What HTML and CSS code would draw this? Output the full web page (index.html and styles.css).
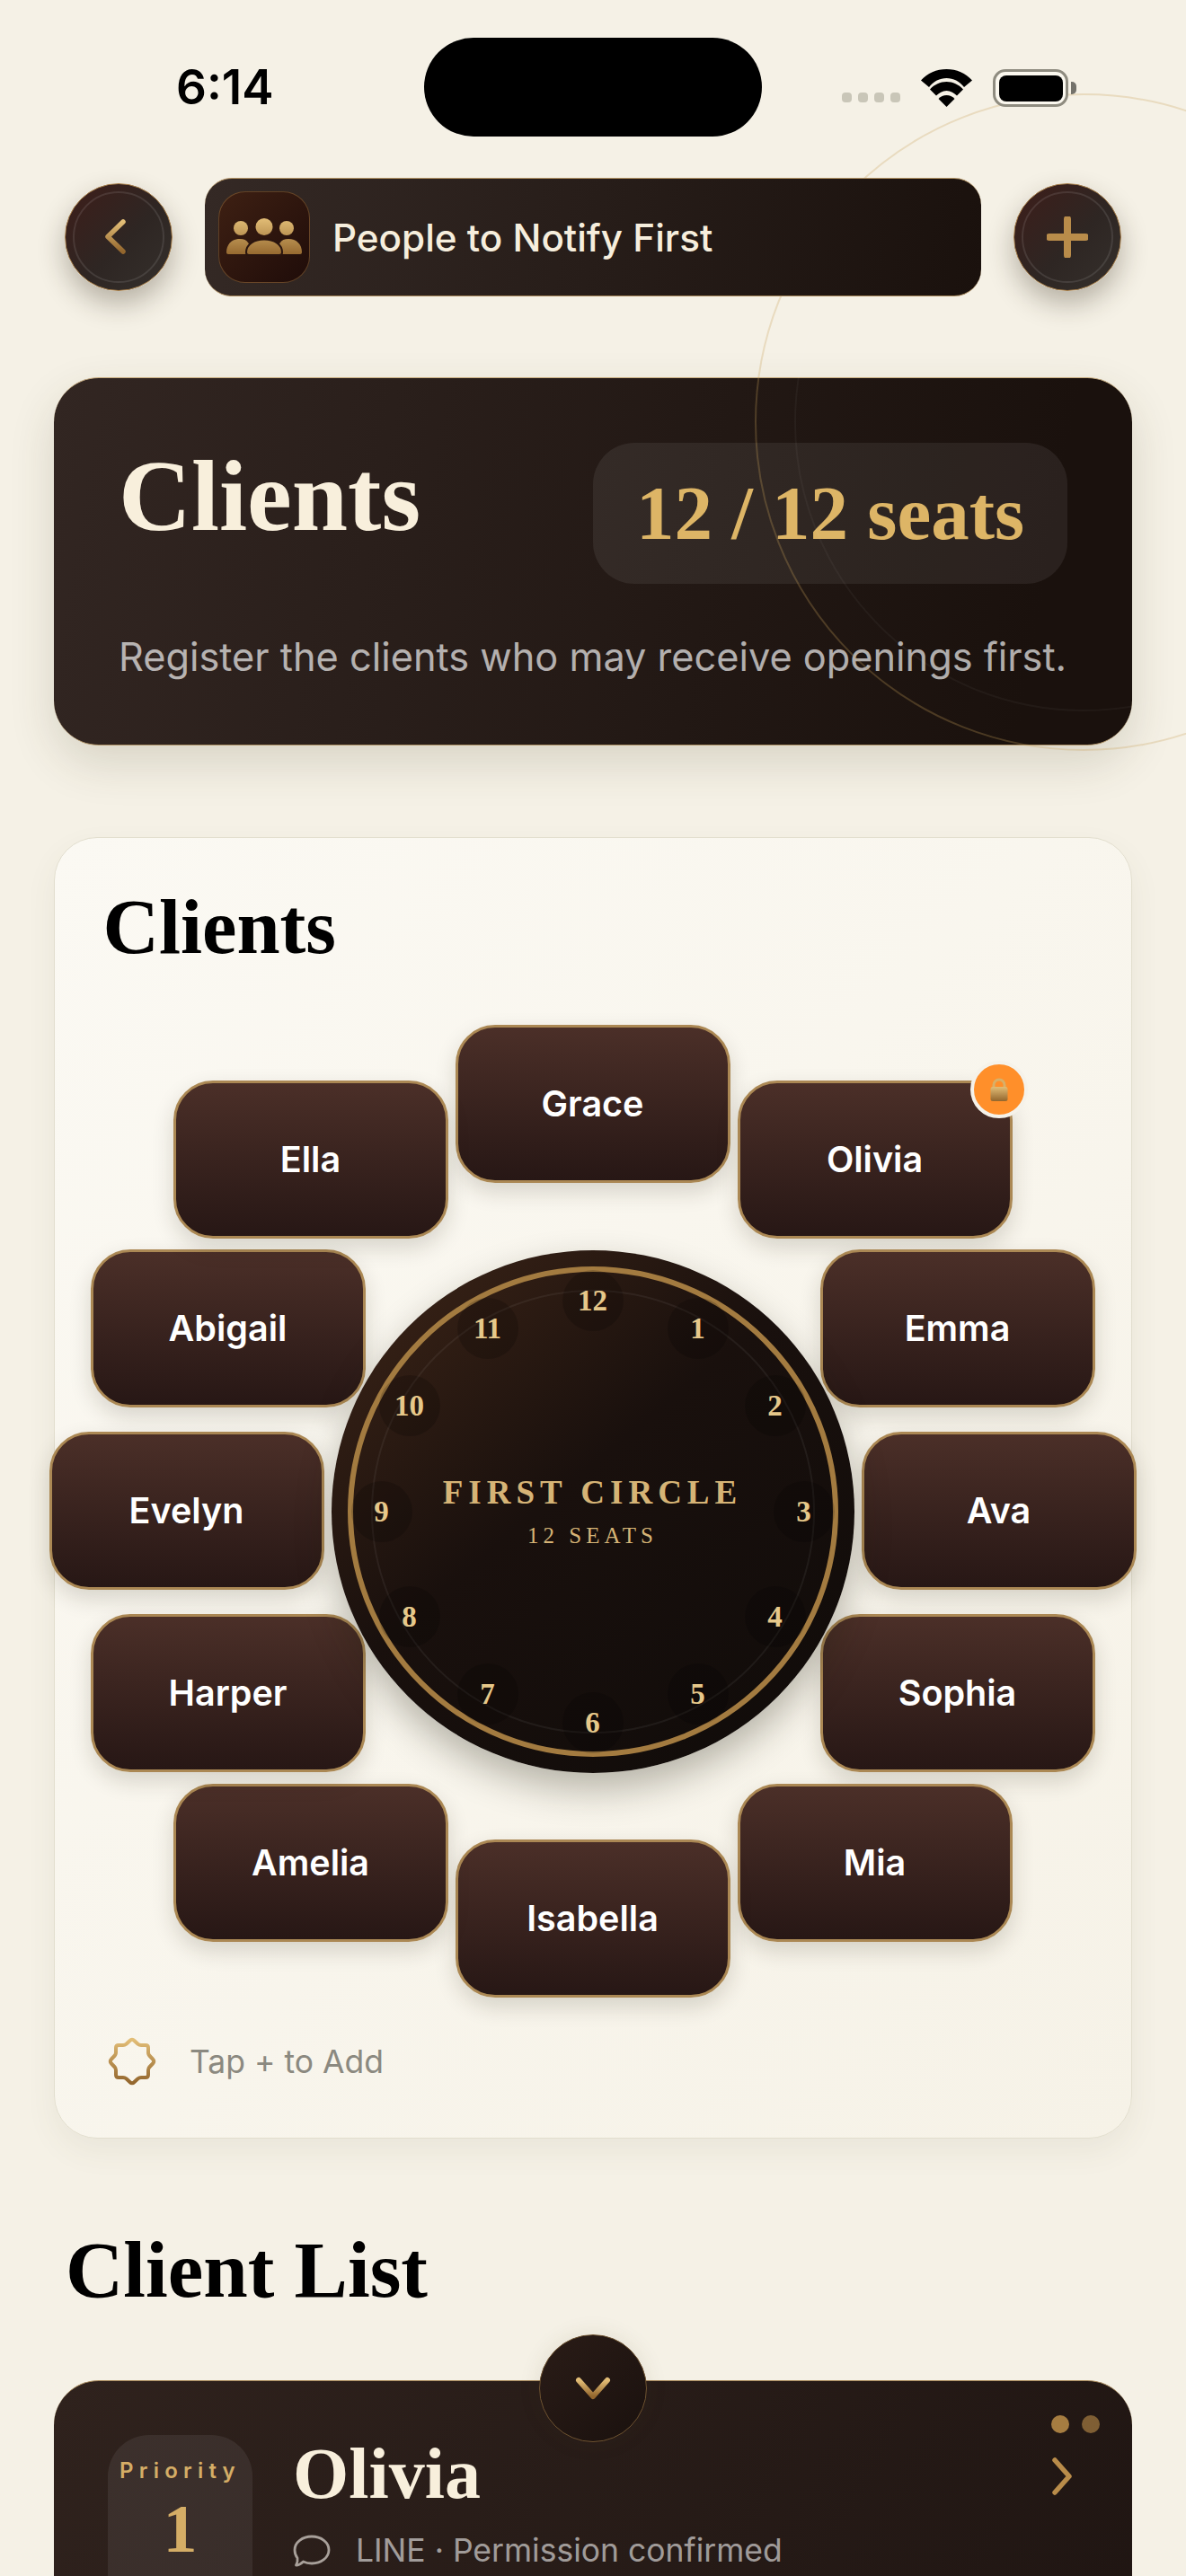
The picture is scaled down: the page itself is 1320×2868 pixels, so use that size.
FILE: index.html
```html
<!DOCTYPE html>
<html lang="en">
<head>
  <meta charset="UTF-8">
  <meta name="viewport" content="width=device-width, initial-scale=1.0">
  <title>People to Notify First</title>
  <link rel="stylesheet" href="styles.css">
</head>
<body>
  <svg class="defs" width="0" height="0">
    <defs>
      <linearGradient id="gold" x1="0" y1="0" x2="0" y2="1">
        <stop offset="0" stop-color="#e2bd76"/>
        <stop offset="1" stop-color="#93662d"/>
      </linearGradient>
      <linearGradient id="goldUser" gradientUnits="userSpaceOnUse" x1="0" y1="30" x2="0" y2="72">
        <stop offset="0" stop-color="#e2bd76"/>
        <stop offset="1" stop-color="#93662d"/>
      </linearGradient>
    </defs>
  </svg>
  <div class="screen">
    <div class="ring ring-outer"></div>
    <div class="ring ring-inner"></div>

    <div class="status-bar">
      <div class="time">6:14</div>
      <div class="island"></div>
      <div class="status-icons">
        <div class="signal"><span></span><span></span><span></span><span></span></div>
        <svg class="wifi" width="57" height="42" viewBox="0 0 57 42">
          <path d="M0 12.500C7 4.500 17.500 0 28.500 0S50 4.500 57 12.500L48 20C43 13.500 36 10 28.500 10S14 13.500 9 20Z"/>
          <path d="M10 22.500C15 17 21.500 14 28.500 14S42 17 47 22.500L40 29.500C37 26.500 33 24 28.500 24S20 26.500 17 29.500Z"/>
          <path d="M19.500 33C22 30.500 25 29 28.500 29S35 30.500 37.500 33L28.500 42Z"/>
        </svg>
        <div class="battery"><div class="battery-fill"></div></div>
        <div class="battery-tip"></div>
      </div>
    </div>

    <div class="nav">
      <button class="round-btn" type="button">
        <svg class="back-icon" width="24" height="40" viewBox="0 0 24 40"><polyline points="20,3 3,19.500 20,36" fill="none" stroke="url(#gold)" stroke-width="5.500" stroke-linecap="round" stroke-linejoin="round"/></svg>
      </button>
      <div class="nav-title">
        <div class="nav-tile">
          <svg width="102" height="102" viewBox="0 0 102 102">
            <circle cx="25" cy="41" r="8" fill="url(#goldUser)"/>
            <circle cx="76" cy="41" r="8" fill="url(#goldUser)"/>
            <circle cx="51" cy="39.500" r="9.500" fill="url(#goldUser)"/>
            <path d="M11 70Q9 70 9 68C9 59 15 53 24 53S36 59 36 70Z" fill="url(#goldUser)"/>
            <path d="M91 70Q93 70 93 68C93 59 87 53 78 53S66 59 66 70Z" fill="url(#goldUser)"/>
            <path d="M34 71Q31 71 31 68C31 59 40 53.500 51 53.500S71 59 71 68Q71 71 68 71Z" fill="url(#goldUser)" stroke="#2a150f" stroke-width="2"/>
          </svg>
        </div>
        <span>People to Notify First</span>
      </div>
      <button class="round-btn" type="button">
        <svg width="46" height="46" viewBox="0 0 46 46"><path d="M23 3V43M3 23H43" fill="none" stroke="#b98c4a" stroke-width="8" stroke-linecap="round"/></svg>
      </button>
    </div>

    <div class="hero">
      <div class="hero-row">
        <h1>Clients</h1>
        <div class="seat-count">12 / 12 seats</div>
      </div>
      <p>Register the clients who may receive openings first.</p>
    </div>

    <section class="seating-card">
      <h2>Clients</h2>
      <div class="seating">
        <div class="seat seat-grace">Grace</div>
        <div class="seat seat-olivia">Olivia
          <div class="lock-badge">
            <svg width="20" height="28" viewBox="0 0 20 28"><path d="M4 14V9a6 6 0 0 1 12 0v5" fill="none" stroke="#d8b069" stroke-width="3"/><rect x="0.500" y="11" width="19" height="16" rx="2.500" fill="url(#gold)"/></svg>
          </div>
        </div>
        <div class="seat seat-emma">Emma</div>
        <div class="seat seat-ava">Ava</div>
        <div class="seat seat-sophia">Sophia</div>
        <div class="seat seat-mia">Mia</div>
        <div class="seat seat-isabella">Isabella</div>
        <div class="seat seat-amelia">Amelia</div>
        <div class="seat seat-harper">Harper</div>
        <div class="seat seat-evelyn">Evelyn</div>
        <div class="seat seat-abigail">Abigail</div>
        <div class="seat seat-ella">Ella</div>

        <div class="dial">
          <div class="dial-gold"></div>
          <div class="dial-faint"></div>
          <div class="hour h12">12</div>
          <div class="hour h1">1</div>
          <div class="hour h2">2</div>
          <div class="hour h3">3</div>
          <div class="hour h4">4</div>
          <div class="hour h5">5</div>
          <div class="hour h6">6</div>
          <div class="hour h7">7</div>
          <div class="hour h8">8</div>
          <div class="hour h9">9</div>
          <div class="hour h10">10</div>
          <div class="hour h11">11</div>
          <div class="dial-label">FIRST CIRCLE</div>
          <div class="dial-sub">12 SEATS</div>
        </div>
      </div>
      <div class="tap-hint">
        <svg width="56" height="56" viewBox="0 0 56 56"><path d="M25.500 5Q28 2.500 30.500 5L34.500 8.800Q36 10 38 10H43Q46 10 46 13V18Q46 20 47.200 21.500L51 25.500Q53.500 28 51 30.500L47.200 34.500Q46 36 46 38V43Q46 46 43 46H38Q36 46 34.500 47.200L30.500 51Q28 53.500 25.500 51L21.500 47.200Q20 46 18 46H13Q10 46 10 43V38Q10 36 8.800 34.500L5 30.500Q2.500 28 5 25.500L8.800 21.500Q10 20 10 18V13Q10 10 13 10H18Q20 10 21.500 8.800Z" fill="none" stroke="url(#gold)" stroke-width="4" stroke-linejoin="round"/></svg>
        <span>Tap + to Add</span>
      </div>
    </section>

    <h2 class="list-title">Client List</h2>

    <section class="client-row">
      <button class="collapse-btn" type="button">
        <svg width="40" height="26" viewBox="0 0 40 26"><polyline points="4,4 20,22 36,4" fill="none" stroke="url(#gold)" stroke-width="6" stroke-linecap="round" stroke-linejoin="round"/></svg>
      </button>
      <div class="priority">
        <div class="priority-label">Priority</div>
        <div class="priority-num">1</div>
      </div>
      <div class="client-info">
        <div class="client-name">Olivia</div>
        <div class="client-meta">
          <svg width="42" height="36" viewBox="0 0 42 36"><path d="M21 2C31.500 2 40 8.500 40 17S31.500 32 21 32C17.500 32 14 31.200 11.500 30 9 32.500 6 34 3.500 34 5 31.500 5.500 29 5 26 3 23.500 2 20.500 2 17 2 8.500 10.500 2 21 2Z" fill="none" stroke="#a8a09a" stroke-width="2.800" stroke-linejoin="round"/></svg>
          <span>LINE · Permission confirmed</span>
        </div>
      </div>
      <div class="row-dots"><span></span><span></span></div>
      <svg class="row-chevron" width="24" height="42" viewBox="0 0 24 42"><polyline points="4,3 20,21 4,39" fill="none" stroke="#b98c4a" stroke-width="5.500" stroke-linecap="round" stroke-linejoin="round"/></svg>
    </section>
  </div>
</body>
</html>
```

FILE: styles.css
```css
* {
  box-sizing: border-box;
}
body {
  margin: 0;
  background: #f5f1e6;
  font-family: Inter, "Noto Sans", sans-serif;
}
.defs {
  position: absolute;
}
.screen {
  position: relative;
  width: 1320px;
  height: 2868px;
  overflow: hidden;
}

/* decorative rings behind the header */
.ring {
  position: absolute;
  border-radius: 50%;
  pointer-events: none;
  z-index: 2;
}
.ring-outer {
  left: 840px;
  top: 104px;
  width: 732px;
  height: 732px;
  border: 2px solid rgba(201, 160, 90, 0.28);
}
.ring-inner {
  left: 884px;
  top: 148px;
  width: 644px;
  height: 644px;
  border: 2px solid rgba(255, 255, 255, 0.04);
}

/* status bar */
.status-bar {
  position: relative;
  z-index: 3;
  display: grid;
  grid-template-columns: 472px 376px 1fr;
  align-items: center;
  height: 110px;
  margin-top: 42px;
}
.time {
  padding-left: 196px;
  font-weight: 600;
  font-size: 53px;
  color: #000;
}
.island {
  height: 110px;
  background: #000;
  border-radius: 55px;
}
.status-icons {
  display: flex;
  align-items: center;
  padding-left: 89px;
  padding-top: 2px;
}
.signal {
  display: flex;
  gap: 7px;
  margin-right: 23px;
  margin-top: 20px;
}
.signal span {
  width: 11px;
  height: 11px;
  border-radius: 4px;
  background: #c9c6b8;
}
.wifi {
  fill: #000;
  margin-right: 23px;
}
.battery {
  width: 84px;
  height: 42px;
  padding: 3.5px;
  border: 3.5px solid #8f8c80;
  border-radius: 14px;
  background: #fbf8ef;
}
.battery-fill {
  height: 100%;
  border-radius: 8px;
  background: #000;
}
.battery-tip {
  width: 6px;
  height: 14px;
  margin-left: 3px;
  border-radius: 0 5px 5px 0;
  background: #74726b;
}

/* nav */
.nav {
  position: relative;
  z-index: 3;
  display: flex;
  align-items: center;
  gap: 36px;
  margin-top: 46px;
  padding: 0 72px;
}
.round-btn {
  position: relative;
  display: flex;
  align-items: center;
  justify-content: center;
  flex: none;
  width: 120px;
  height: 120px;
  padding: 0;
  border: 1.5px solid #a47c48;
  border-radius: 50%;
  background: linear-gradient(135deg, #3b1f1b 10%, #2e2623 55%, #35302c 100%);
  box-shadow: 0 14px 30px rgba(50, 40, 25, 0.32);
}
.round-btn::before {
  content: "";
  position: absolute;
  inset: 8px;
  border: 2px solid rgba(255, 255, 255, 0.1);
  border-radius: 50%;
}
.back-icon {
  margin-right: 6px;
}
.nav-title {
  display: flex;
  align-items: center;
  flex: 1;
  height: 132px;
  padding-left: 15px;
  border-radius: 30px;
  border-top: 1.5px solid #b49464;
  border-bottom: 1.5px solid #a58558;
  background: linear-gradient(100deg, #342925 0%, #1a110d 100%);
  font-weight: 500;
  font-size: 42.2px;
  color: #f6eedd;
}
.nav-tile {
  flex: none;
  width: 102px;
  height: 102px;
  margin-right: 25px;
  border: 1.5px solid rgba(180, 135, 75, 0.4);
  border-radius: 30px;
  background: linear-gradient(135deg, #3e2013 0%, #1f0c09 100%);
}
.nav-tile svg {
  display: block;
  margin: -1.5px;
}

/* hero */
.hero {
  position: relative;
  z-index: 1;
  display: flex;
  flex-direction: column;
  height: 410px;
  margin: 90px 60px 0;
  padding: 72px 72px 0 72px;
  border-radius: 50px;
  border-top: 1.5px solid #c8ad80;
  border-bottom: 1.5px solid #b09468;
  background: linear-gradient(100deg, #322622 0%, #1a110d 90%);
  box-shadow: 0 20px 50px rgba(70, 60, 30, 0.16);
}
.hero-row {
  display: flex;
  justify-content: space-between;
  align-items: flex-start;
  height: 157px;
}
.hero h1 {
  margin: 3px 0 0;
  font-family: "Liberation Serif", serif;
  font-weight: 700;
  font-size: 112px;
  line-height: 112px;
  color: #f8efdc;
}
.seat-count {
  width: 528px;
  height: 157px;
  border-radius: 46px;
  background: rgba(255, 255, 255, 0.07);
  font-family: "Liberation Serif", serif;
  font-weight: 700;
  font-size: 85px;
  line-height: 157px;
  text-align: center;
  color: #ddb566;
}
.hero p {
  margin: 53px 0 0;
  font-size: 43.3px;
  line-height: 56px;
  white-space: nowrap;
  color: rgba(255, 255, 255, 0.66);
}

/* seating card */
.seating-card {
  position: relative;
  height: 1449px;
  margin: 102px 60px 0;
  border: 1.5px solid #e2dece;
  border-radius: 48px;
  background: linear-gradient(135deg, #fbf9f3 0%, #f6f2e7 100%);
  box-shadow: 0 14px 34px rgba(90, 80, 50, 0.07);
}
.seating-card h2 {
  margin: 0;
  padding: 54px 0 0 53.5px;
  font-family: "Liberation Serif", serif;
  font-weight: 700;
  font-size: 86.5px;
  line-height: 90px;
  color: #000;
}
.seating {
  position: absolute;
  left: -1.5px;
  top: 186.5px;
  width: 1200px;
  height: 1110px;
}
.seat {
  position: absolute;
  display: flex;
  align-items: center;
  justify-content: center;
  width: 306px;
  height: 176px;
  border: 3px solid #ab8854;
  border-radius: 44px;
  background: linear-gradient(180deg, #4b2f28 0%, #271715 100%);
  box-shadow: 0 10px 24px rgba(40, 30, 15, 0.16);
  font-weight: 600;
  font-size: 39.5px;
  color: #fff;
}
.seat-grace { left: 447px; top: 21px; }
.seat-olivia { left: 761px; top: 83px; }
.seat-emma { left: 853px; top: 271px; }
.seat-ava { left: 899px; top: 474px; }
.seat-sophia { left: 853px; top: 677px; }
.seat-mia { left: 761px; top: 866px; }
.seat-isabella { left: 447px; top: 928px; }
.seat-amelia { left: 133px; top: 866px; }
.seat-harper { left: 41px; top: 677px; }
.seat-evelyn { left: -5px; top: 474px; }
.seat-abigail { left: 41px; top: 271px; }
.seat-ella { left: 133px; top: 83px; }

.lock-badge {
  position: absolute;
  right: -20px;
  top: -25px;
  display: flex;
  align-items: center;
  justify-content: center;
  width: 64px;
  height: 64px;
  border: 4px solid #f5f2ea;
  border-radius: 50%;
  background: #ff8f2a;
}

/* dial */
.dial {
  position: absolute;
  left: 309px;
  top: 272px;
  display: flex;
  flex-direction: column;
  align-items: center;
  justify-content: center;
  width: 582px;
  height: 582px;
  border-radius: 50%;
  background: linear-gradient(140deg, #3f2618 0%, #19100d 45%, #0f0b09 100%);
  box-shadow: 0 18px 40px rgba(30, 25, 10, 0.3);
}
.dial-gold {
  position: absolute;
  inset: 18px;
  border: 6px solid #a37b40;
  border-radius: 50%;
}
.dial-faint {
  position: absolute;
  inset: 44px;
  border: 2px solid rgba(255, 255, 255, 0.06);
  border-radius: 50%;
}
.hour {
  position: absolute;
  width: 68px;
  height: 68px;
  border-radius: 50%;
  background: rgba(0, 0, 0, 0.18);
  font-family: "Liberation Serif", serif;
  font-weight: 700;
  font-size: 33px;
  line-height: 68px;
  text-align: center;
  color: #e6c88a;
}
.h12 { left: 257px; top: 22px; }
.h1 { left: 374px; top: 53px; }
.h2 { left: 460px; top: 139px; }
.h3 { left: 492px; top: 257px; }
.h4 { left: 460px; top: 374px; }
.h5 { left: 374px; top: 460px; }
.h6 { left: 257px; top: 492px; }
.h7 { left: 140px; top: 460px; }
.h8 { left: 53px; top: 374px; }
.h9 { left: 22px; top: 257px; }
.h10 { left: 53px; top: 139px; }
.h11 { left: 140px; top: 53px; }
.dial-label {
  font-family: "Liberation Serif", serif;
  font-weight: 700;
  font-size: 37px;
  line-height: 44px;
  letter-spacing: 6px;
  color: #d6b476;
}
.dial-sub {
  margin-top: 11px;
  font-family: "Liberation Serif", serif;
  font-size: 25px;
  line-height: 30px;
  letter-spacing: 5px;
  color: #d6b476;
}

.tap-hint {
  position: absolute;
  left: 58px;
  top: 1334px;
  display: flex;
  align-items: center;
  gap: 36px;
  font-size: 35.5px;
  color: #8b8980;
}

/* client list */
.list-title {
  margin: 92px 0 0 73px;
  font-family: "Liberation Serif", serif;
  font-weight: 700;
  font-size: 89px;
  line-height: 108px;
  color: #000;
}
.client-row {
  position: relative;
  display: flex;
  height: 400px;
  margin: 69px 60px 0;
  padding: 60px 0 0 60px;
  border-radius: 50px;
  border-top: 1.5px solid #a98a5c;
  background: linear-gradient(120deg, #2f221d 0%, #1f1512 100%);
}
.collapse-btn {
  position: absolute;
  left: 540px;
  top: -52px;
  display: flex;
  align-items: center;
  justify-content: center;
  width: 120px;
  height: 120px;
  padding: 0;
  border: 1.5px solid #6d5230;
  border-radius: 50%;
  background: linear-gradient(135deg, #2a1c17 0%, #1a110e 100%);
  box-shadow: 0 0 24px rgba(70, 60, 30, 0.1);
}
.priority {
  flex: none;
  width: 161px;
  height: 300px;
  padding-top: 24px;
  border-radius: 46px;
  background: rgba(255, 255, 255, 0.07);
  text-align: center;
}
.priority-label {
  font-weight: 600;
  font-size: 24px;
  line-height: 32px;
  letter-spacing: 6.2px;
  color: #d4ad66;
}
.priority-num {
  margin-top: 6px;
  font-family: "Liberation Serif", serif;
  font-weight: 700;
  font-size: 76px;
  line-height: 84px;
  color: #d4ad66;
}
.client-info {
  margin-left: 45px;
}
.client-name {
  margin-top: -3px;
  font-family: "Liberation Serif", serif;
  font-weight: 700;
  font-size: 80px;
  line-height: 92px;
  color: #f8efdc;
}
.client-meta {
  display: flex;
  align-items: center;
  gap: 28px;
  margin-top: 18px;
  font-size: 35.5px;
  color: rgba(255, 255, 255, 0.58);
}
.row-dots {
  position: absolute;
  right: 36px;
  top: 38px;
  display: flex;
  gap: 14px;
}
.row-dots span {
  width: 20px;
  height: 20px;
  border-radius: 50%;
  background: #a67d41;
}
.row-dots span + span {
  opacity: 0.7;
}
.row-chevron {
  position: absolute;
  right: 66px;
  top: 85px;
}
```
